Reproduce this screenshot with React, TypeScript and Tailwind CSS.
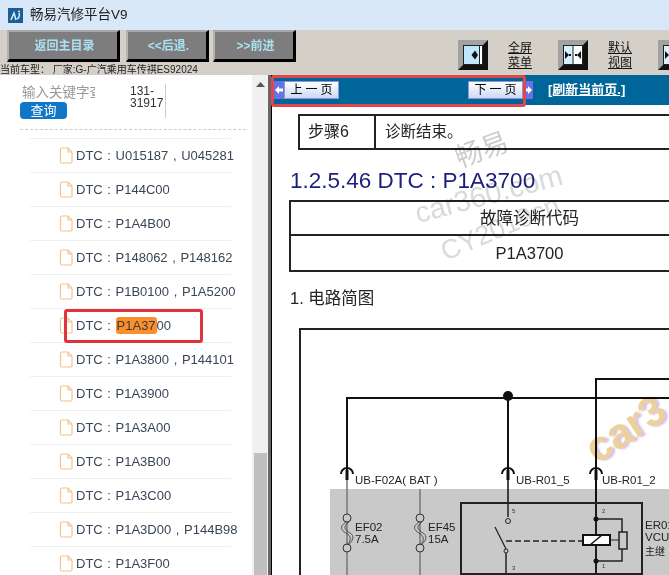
import { Fragment } from "react"

const rows = [
  "DTC : U015187 , U045281",
  "DTC : P144C00",
  "DTC : P1A4B00",
  "DTC : P148062 , P148162",
  "DTC : P1B0100 , P1A5200",
  "HIGHLIGHT",
  "DTC : P1A3800 , P144101",
  "DTC : P1A3900",
  "DTC : P1A3A00",
  "DTC : P1A3B00",
  "DTC : P1A3C00",
  "DTC : P1A3D00 , P144B98",
  "DTC : P1A3F00",
]

function FileIcon() {
  return (
    <svg width="14" height="17" viewBox="0 0 14 17" fill="none" stroke="#f3c48f" strokeWidth="1.2" className="shrink-0">
      <path d="M1.500 2.500a1.500 1.500 0 0 1 1.500-1.500h6l4 4v9.500a1.500 1.500 0 0 1-1.500 1.500H3a1.500 1.500 0 0 1-1.500-1.500z" />
      <path d="M9 1v4h4" />
    </svg>
  )
}

function ToolButton({ label, className }: { label: string; className: string }) {
  return (
    <button className={`h-[32px] shrink-0 bg-[#7d7d7d] border-t-2 border-l-2 border-r-[3px] border-b-[3px] border-t-[#a8a8a8] border-l-[#b4b4b4] border-r-black border-b-black text-[#a9e0f2] text-[12px] font-bold pl-[3px] ${className}`}>
      {label}
    </button>
  )
}

function ViewIcon({ split }: { split?: boolean }) {
  return (
    <svg width="30" height="30" viewBox="0 0 30 30" className="shrink-0">
      <rect width="30" height="30" fill="#8e8e8e" />
      <path d="M0 0H30L25 5H5V25L0 30Z" fill="#a2a2a2" />
      <path d="M30 0V30H0L5 25H25V5Z" fill="#111" />
      <rect x="5.500" y="5.500" width="19" height="19" fill="#fff" stroke="#222" />
      {split ? (
        <>
          <rect x="6" y="6" width="9" height="18" fill="#d8f2fd" />
          <path d="M15 6V24" stroke="#222" />
          <path d="M7 11l4 4-4 4zM23 11l-4 4 4 4z" fill="#111" />
          <rect x="11" y="14" width="2" height="2" fill="#111" />
          <rect x="17" y="14" width="2" height="2" fill="#111" />
        </>
      ) : (
        <>
          <rect x="6" y="6" width="15" height="18" fill="#bfe9fb" />
          <path d="M21.500 6V24" stroke="#222" />
          <path d="M17 10.500l-3.500 4.500 3.500 4.500 3 -4.500z" fill="#111" />
        </>
      )}
    </svg>
  )
}

function PageButton({ label, dir }: { label: string; dir: "prev" | "next" }) {
  const arrow = (
    <span className="w-[10px] h-[18px] bg-[#6672e6] flex items-center justify-center">
      <svg width="8" height="8" viewBox="0 0 8 8" fill="#fff">
        <path d={dir === "prev" ? "M0 4l4-4v2.500h4v3H4V8z" : "M8 4L4 0v2.500H0v3h4V8z"} />
      </svg>
    </span>
  )
  return (
    <div className="flex items-center">
      {dir === "prev" && arrow}
      <div className="w-[55px] h-[18px] pl-[3px] bg-gradient-to-b from-[#ffffff] to-[#cfd8f5] border border-[#8d96d8] text-[12px] text-black flex items-center justify-center tracking-[3px] leading-none">
        {label}
      </div>
      {dir === "next" && arrow}
    </div>
  )
}

function Diagram() {
  const w = "#111"
  return (
    <svg width="398" height="247" viewBox="271 328 398 247" className="block" style={{ fontFamily: "'Liberation Sans', 'Noto Sans CJK SC', sans-serif" }}>
      <rect x="330" y="489" width="339" height="86" fill="#c9c9c9" />
      <path d="M300 575V329H669" fill="none" stroke="#222" strokeWidth="2" />
      <path d="M347 470V398H669M596 575V379H669" fill="none" stroke={w} strokeWidth="2" />
      <path d="M508 397V470" stroke={w} strokeWidth="2" fill="none" />
      <circle cx="508" cy="396" r="5" fill="#111" />
      {[347, 508, 596].map((x) => (
        <Fragment key={x}>
          <path d={`M${x - 6} 474a6 6 0 0 1 12 0`} fill="none" stroke={w} strokeWidth="2" />
          <path d={`M${x} 470V480`} stroke={w} strokeWidth="3" />
        </Fragment>
      ))}
      <text x="355" y="484" fontSize="11.500" fill="#222">UB-F02A( BAT )</text>
      <text x="516" y="484" fontSize="11.500" fill="#222">UB-R01_5</text>
      <text x="602" y="484" fontSize="11.500" fill="#222">UB-R01_2</text>
      <path d="M347 480V575M420 489V575" stroke="#777" strokeWidth="1.500" fill="none" />
      <path d="M508 480V503M596 480V503" stroke={w} strokeWidth="1.500" fill="none" />
      {[347, 420].map((x) => (
        <Fragment key={x}>
          <circle cx={x} cy="518" r="4" fill="#c9c9c9" stroke="#333" />
          <circle cx={x} cy="548" r="4" fill="#c9c9c9" stroke="#333" />
          <path d={`M${x - 1} 522c-7 5-5 8 0 11s6 7 1 12M${x + 2} 522c-7 5-4 8 1 11s3 8-2 12`} fill="none" stroke="#333" strokeWidth="0.8" />
        </Fragment>
      ))}
      <text x="355" y="531" fontSize="11.500" fill="#222">EF02</text>
      <text x="355" y="543" fontSize="11.500" fill="#222">7.5A</text>
      <text x="428" y="531" fontSize="11.500" fill="#222">EF45</text>
      <text x="428" y="543" fontSize="11.500" fill="#222">15A</text>
      <rect x="461" y="503" width="181" height="71" fill="none" stroke="#222" strokeWidth="2" />
      <path d="M508 503V517M596 503V535M596 546V575M596 519H622V532M596 561H622V549M506 553V575" fill="none" stroke="#222" strokeWidth="1.500" />
      <circle cx="508" cy="521" r="2.500" fill="#c9c9c9" stroke="#222" />
      <circle cx="596" cy="519" r="2.500" fill="#111" />
      <circle cx="596" cy="561" r="2.500" fill="#111" />
      <circle cx="506" cy="551" r="2" fill="#c9c9c9" stroke="#222" />
      <path d="M495 527L506 549" stroke="#222" strokeWidth="1.200" />
      <path d="M506 541H582" stroke="#222" strokeWidth="1.500" strokeDasharray="6 3" />
      <rect x="583" y="535" width="27" height="10" fill="#fff" stroke="#111" strokeWidth="2" />
      <path d="M590 545L602 535" stroke="#111" strokeWidth="1.500" />
      <path d="M610 540H619" stroke="#222" />
      <rect x="619" y="532" width="8" height="17" fill="#c9c9c9" stroke="#222" strokeWidth="1.500" />
      <text x="512" y="513" fontSize="6" fill="#333">5</text>
      <text x="602" y="513" fontSize="6" fill="#333">2</text>
      <text x="512" y="570" fontSize="6" fill="#333">3</text>
      <text x="602" y="568" fontSize="6" fill="#333">1</text>
      <text x="645" y="529" fontSize="11.500" fill="#222">ER01</text>
      <text x="645" y="541" fontSize="11.500" fill="#222">VCU</text>
      <text x="645" y="555" fontSize="10" fill="#222">主继</text>
    </svg>
  )
}

export default function App() {
  return (
    <div className="w-[669px] h-[575px] overflow-hidden flex flex-col bg-white font-['Liberation_Sans','Noto_Sans_CJK_SC',sans-serif] relative">
      {/* title bar */}
      <div className="h-[30px] shrink-0 bg-[#d9e8f8] flex items-center gap-[7px] pl-2">
        <div className="w-[15px] h-[15px] bg-[#1b5f96] flex items-center justify-center">
          <svg width="11" height="11" viewBox="0 0 11 11" fill="none" stroke="#d8eefa" strokeWidth="1.500">
            <path d="M1 10L4 3l2 7M7 9c2-1 3-3 2-6" />
            <circle cx="9" cy="1.500" r="1" fill="#d8eefa" stroke="none" />
          </svg>
        </div>
        <span className="text-[13.500px] text-[#222]">畅易汽修平台V9</span>
      </div>

      {/* toolbar */}
      <div className="h-[45px] shrink-0 bg-[#d4d0c8] relative flex items-start pl-[7px] overflow-hidden">
        <ToolButton label="返回主目录" className="w-[113px]" />
        <ToolButton label="<<后退." className="w-[83px] ml-[6px]" />
        <ToolButton label=">>前进" className="w-[83px] ml-[4px]" />
        <div className="flex shrink-0 items-center pt-[9px] ml-[162px]">
          <ViewIcon />
          <div className="ml-5 mt-[2px] w-[24px] text-[12px] leading-[15px] underline text-[#111] text-center">全屏菜单</div>
          <div className="ml-[26px]"><ViewIcon split /></div>
          <div className="ml-5 mt-[2px] w-[24px] text-[12px] leading-[15px] underline text-[#111] text-center">默认视图</div>
          <div className="ml-[26px]"><ViewIcon split /></div>
        </div>
        <div className="absolute left-0 top-[34px] text-[10px] leading-[12px] text-[#222] whitespace-nowrap">
          当前车型： 厂家:G-广汽乘用车传祺ES92024
        </div>
      </div>

      <div className="flex-1 flex min-h-0">
        {/* sidebar */}
        <div className="w-[252px] shrink-0 overflow-hidden bg-white">
          <div className="h-[54px] relative flex pl-5 pt-[9px]">
            <div className="w-[110px]">
              <div className="w-[75px] pl-[2px] overflow-hidden whitespace-nowrap text-[13.500px] leading-[18px] text-[#999]">输入关键字查询</div>
              <div className="w-[47px] h-[17px] rounded bg-[#0f76c8] text-white text-[13px] leading-[17px] text-center">查询</div>
            </div>
            <div className="w-[36px] h-[34px] pt-px border-r border-[#ccc] text-[12px] leading-[12px] text-[#333]">131-<br />31917</div>
          </div>
          <div className="mx-5 w-[226px] border-t border-dashed border-[#ccc]" />
          <div className="mt-[8px] ml-[30px] w-[201px] border-t border-[#eee]" />
          {rows.map((r) => (
            <div key={r} className="h-[34px] w-[201px] ml-[30px] flex items-center border-b border-[#f0f0f0] whitespace-nowrap text-[13px] text-[#3a4656] [word-spacing:1px]">
              <div className="ml-[29px] mr-[3px]"><FileIcon /></div>
              <span>
                {r === "HIGHLIGHT" ? (
                  <>DTC : <span className="bg-[#fb8f2c] rounded-[3px] px-px py-px text-[#3c3c3c]">P1A37</span>00</>
                ) : r}
              </span>
            </div>
          ))}
        </div>

        {/* scrollbar */}
        <div className="w-[16px] shrink-0 bg-[#f0f0f0] flex flex-col items-center justify-between">
          <svg width="9" height="5" viewBox="0 0 9 5" fill="#555" className="mt-[7px]"><path d="M4.500 0L9 5H0z" /></svg>
          <div className="w-[13px] h-[122px] bg-[#c0c0c0]" />
        </div>

        {/* splitter + content */}
        <div className="w-[4px] shrink-0 bg-[#666] border-r border-black" />
        <div className="flex-1 min-w-0 overflow-hidden bg-white">
          <div className="h-[30px] bg-[#006699] flex items-center pl-[2px]">
            <PageButton label="上一页" dir="prev" />
            <div className="ml-[129px]"><PageButton label="下一页" dir="next" /></div>
            <span className="ml-[15px] text-[13px] font-bold text-white underline">[刷新当前页.]</span>
          </div>
          <div className="h-[9px]" />
          <div className="ml-[26px] w-[420px] h-[36px] border-2 border-[#222] flex text-[16px] text-[#222]">
            <div className="w-[76px] border-r-2 border-[#222] flex items-center pl-[8px]">步骤6</div>
            <div className="pl-[9px] flex items-center text-[15.500px]">诊断结束。</div>
          </div>
          <div className="ml-[18px] mt-[18px] text-[22.500px] leading-[26px] text-[#1c1f7c]">1.2.5.46 DTC : P1A3700</div>
          <div className="ml-[17px] mt-[6px] w-[481px] h-[72px] border-2 border-[#222] text-[16.500px] text-[#222]">
            <div className="h-[34px] border-b-2 border-[#222] flex items-center justify-center">故障诊断代码</div>
            <div className="h-[34px] flex items-center justify-center">P1A3700</div>
          </div>
          <div className="ml-[18px] mt-[16px] text-[16.500px] leading-[20px] text-[#222]">1. 电路简图</div>
          <div className="mt-[20px] -ml-px"><Diagram /></div>
        </div>
      </div>

      {/* watermarks */}
      <div className="absolute left-[455px] top-[130px] -rotate-[20deg] text-[27px] text-[#cccccc] mix-blend-multiply">畅易</div>
      <div className="absolute left-[413px] top-[173px] -rotate-[15deg] text-[29px] whitespace-nowrap text-[#dadada] mix-blend-multiply">car360.com</div>
      <div className="absolute left-[437px] top-[208px] -rotate-[23deg] text-[27px] whitespace-nowrap text-[#dadada] mix-blend-multiply">CY2019cn</div>
      <div className="absolute left-[582px] top-[397px] -rotate-[33deg] text-[42px] font-bold text-[#edd09a] mix-blend-multiply [text-shadow:2px_2px_2px_#d8c0e8]">car3</div>

      {/* red callouts */}
      <div className="absolute left-[271px] top-[75px] w-[255px] h-[32px] border-[3px] border-[#e0474c] rounded-[3px]" />
      <div className="absolute left-[64px] top-[309px] w-[139px] h-[34px] border-[3px] border-[#e0343c] rounded-[3px]" />
    </div>
  )
}
